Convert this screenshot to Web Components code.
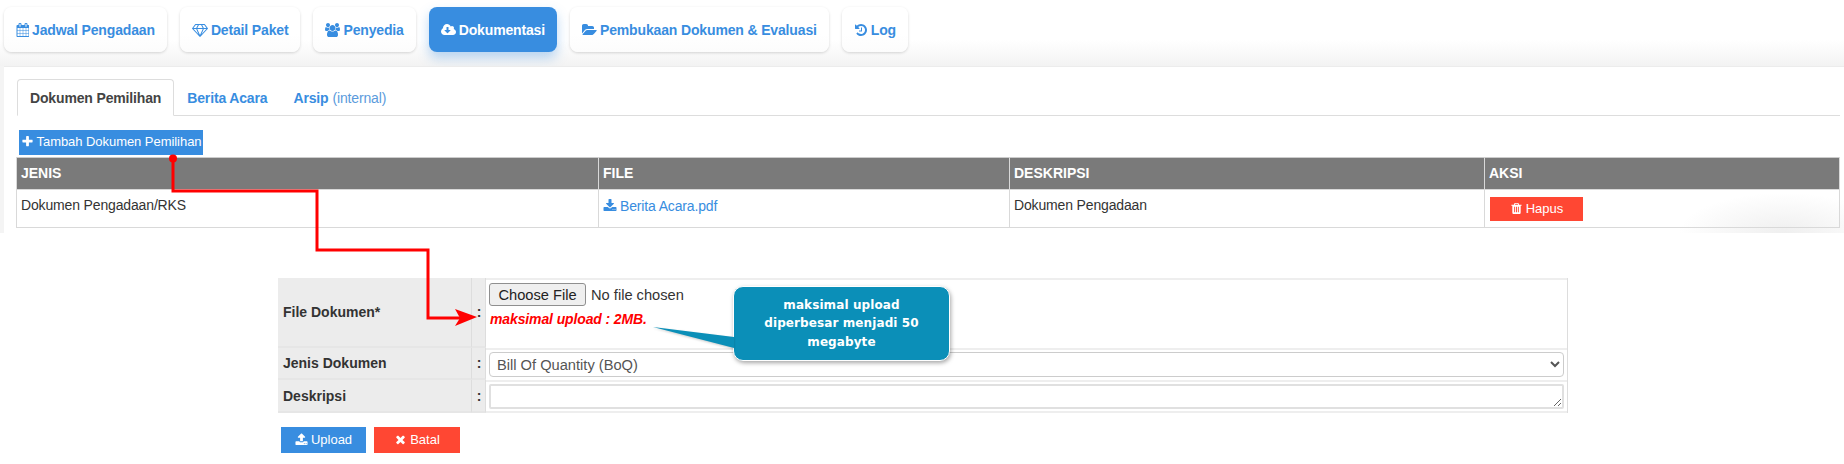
<!DOCTYPE html>
<html lang="id">
<head>
<meta charset="utf-8">
<title>Dokumentasi</title>
<style>
html,body{margin:0;padding:0;background:#fff;overflow:hidden}
body{font:14px "Liberation Sans",Arial,sans-serif;color:#333}
</style>
</head>
<body>
<doc-page>
  <top-nav>
    <nav-pill icon="calendar">Jadwal Pengadaan</nav-pill>
    <nav-pill icon="diamond">Detail Paket</nav-pill>
    <nav-pill icon="users">Penyedia</nav-pill>
    <nav-pill icon="cloud" active>Dokumentasi</nav-pill>
    <nav-pill icon="folder">Pembukaan Dokumen &amp; Evaluasi</nav-pill>
    <nav-pill icon="history">Log</nav-pill>
  </top-nav>
  <content-panel>
    <sub-tabs>
      <sub-tab active>Dokumen Pemilihan</sub-tab>
      <sub-tab>Berita Acara</sub-tab>
      <sub-tab>Arsip <small slot="note">(internal)</small></sub-tab>
    </sub-tabs>
    <action-btn icon="plus" tone="blue" style="--w:184px;--h:25px;--ml:3px;--mt:14px;--ls:-.05px">Tambah Dokumen Pemilihan</action-btn>
    <doc-table>
      <table-cell head>JENIS</table-cell>
      <table-cell head>FILE</table-cell>
      <table-cell head>DESKRIPSI</table-cell>
      <table-cell head>AKSI</table-cell>
      <table-cell>Dokumen Pengadaan/RKS</table-cell>
      <table-cell><file-link>Berita Acara.pdf</file-link></table-cell>
      <table-cell>Dokumen Pengadaan</table-cell>
      <table-cell action><action-btn icon="trash" tone="red" style="--w:93px;--h:24px">Hapus</action-btn></table-cell>
    </doc-table>
  </content-panel>
  <upload-form></upload-form>
  <red-connector></red-connector>
  <callout-note>maksimal upload diperbesar menjadi 50 megabyte</callout-note>
</doc-page>

<script>
const ICONS={
plus:['0 0 1792 1792','M1600 736v192q0 40-28 68t-68 28h-416v416q0 40-28 68t-68 28h-192q-40 0-68-28t-28-68v-416h-416q-40 0-68-28t-28-68v-192q0-40 28-68t68-28h416v-416q0-40 28-68t68-28h192q40 0 68 28t28 68v416h416q40 0 68 28t28 68z'],
times:['0 0 1792 1792','M1490 1322q0 40-28 68l-136 136q-28 28-68 28t-68-28l-294-294-294 294q-28 28-68 28t-68-28l-136-136q-28-28-28-68t28-68l294-294-294-294q-28-28-28-68t28-68l136-136q28-28 68-28t68 28l294 294 294-294q28-28 68-28t68 28l136 136q28 28 28 68t-28 68l-294 294 294 294q28 28 28 68z'],
trash:['0 0 1792 1792','M704 1376v-704q0-14-9-23t-23-9h-64q-14 0-23 9t-9 23v704q0 14 9 23t23 9h64q14 0 23-9t9-23zm256 0v-704q0-14-9-23t-23-9h-64q-14 0-23 9t-9 23v704q0 14 9 23t23 9h64q14 0 23-9t9-23zm256 0v-704q0-14-9-23t-23-9h-64q-14 0-23 9t-9 23v704q0 14 9 23t23 9h64q14 0 23-9t9-23zm-544-992h448l-48-117q-7-9-17-11h-317q-10 2-17 11zm928 32v64q0 14-9 23t-23 9h-96v948q0 83-47 143.500t-113 60.500h-832q-66 0-113-58.500t-47-141.500v-952h-96q-14 0-23-9t-9-23v-64q0-14 9-23t23-9h309l70-167q15-37 54-63t79-26h320q40 0 79 26t54 63l70 167h309q14 0 23 9t9 23z'],
download:['0 0 1792 1792','M1344 1344q0-26-19-45t-45-19-45 19-19 45 19 45 45 19 45-19 19-45zm256 0q0-26-19-45t-45-19-45 19-19 45 19 45 45 19 45-19 19-45zm128-224v320q0 40-28 68t-68 28h-1472q-40 0-68-28t-28-68v-320q0-40 28-68t68-28h465l135 136q58 56 136 56t136-56l136-136h464q40 0 68 28t28 68zm-325-569q17 41-14 70l-448 448q-18 19-45 19t-45-19l-448-448q-31-29-14-70 17-39 59-39h256v-448q0-26 19-45t45-19h256q26 0 45 19t19 45v448h256q42 0 59 39z'],
upload:['0 0 1792 1792','M1344 1472q0-26-19-45t-45-19-45 19-19 45 19 45 45 19 45-19 19-45zm256 0q0-26-19-45t-45-19-45 19-19 45 19 45 45 19 45-19 19-45zm128-224v320q0 40-28 68t-68 28h-1472q-40 0-68-28t-28-68v-320q0-40 28-68t68-28h427q21 56 70.500 92t110.500 36h256q61 0 110.500-36t70.500-92h427q40 0 68 28t28 68zm-325-648q-17 40-59 40h-256v448q0 26-19 45t-45 19h-256q-26 0-45-19t-19-45v-448h-256q-42 0-59-40-17-39 14-69l448-448q18-19 45-19t45 19l448 448q31 30 14 69z'],
cloud:['0 0 1920 1792','M1216 928q0-14-9-23t-23-9h-224v-352q0-13-9.500-22.500t-22.500-9.500h-192q-13 0-22.500 9.500t-9.500 22.500v352h-224q-14 0-23 9t-9 23q0 15 9 24l352 352q9 9 23 9t23-9l351-351q10-12 10-24zm704 224q0 159-112.500 271.500t-271.500 112.500h-1088q-185 0-316.500-131.500t-131.500-316.500q0-130 70-240t188-165q-2-30-2-43 0-212 150-362t362-150q156 0 285.500 87t188.500 231q71-62 166-62 106 0 181 75t75 181q0 76-41 138 130 31 213.500 135.500t83.500 238.500z'],
folder:['0 0 1920 1792','M1879 952q0 31-31 66l-336 396q-43 51-120.500 86.500t-143.500 35.500h-1088q-34 0-60.500-13t-26.500-43q0-31 31-66l336-396q43-51 120.500-86.500t143.500-35.500h1088q34 0 60.500 13t26.500 43zm-343-344v160h-832q-94 0-197 47.500t-164 119.500l-337 396-5 6q0-4-.5-12.500t-.500-12.500v-960q0-92 66-158t158-66h320q92 0 158 66t66 158v32h544q92 0 158 66t66 158z'],
users:['0 0 1920 1792','M593 896q-162 5-265 128h-134q-82 0-138-40.500t-56-118.500q0-353 124-353 6 0 43.500 21t97.500 42.500 119 21.500q67 0 133-23-5 37-5 66 0 139 81 256zm1071 637q0 120-73 189.500t-194 69.500h-874q-121 0-194-69.500t-73-189.500q0-53 3.500-103.500t14-109 26.500-108.500 43-97.500 62-81 85.500-53.500 111.500-20q10 0 43 21.500t73 48 107 48 135 21.500 135-21.500 107-48 73-48 43-21.500q61 0 111.500 20t85.500 53.500 62 81 43 97.500 26.500 108.500 14 109 3.500 103.500zm-1024-1277q0 106-75 181t-181 75-181-75-75-181 75-181 181-75 181 75 75 181zm704 384q0 159-112.500 271.500t-271.500 112.500-271.500-112.500-112.500-271.500 112.500-271.500 271.500-112.500 271.500 112.500 112.500 271.500zm576 225q0 78-56 118.500t-138 40.500h-134q-103-123-265-128 81-117 81-256 0-29-5-66 66 23 133 23 59 0 119-21.500t97.500-42.500 43.500-21q124 0 124 353zm-128-609q0 106-75 181t-181 75-181-75-75-181 75-181 181-75 181 75 75 181z'],
history:['0 0 1792 1792','M1664 896q0 156-61 298t-164 245-245 164-298 61q-172 0-327-72.500t-264-204.500q-7-10-6.500-22.500t8.500-20.500l137-138q10-9 25-9 16 2 23 12 73 95 179 147t225 52q104 0 198.500-40.500t163.500-109.500 109.500-163.500 40.500-198.500-40.500-198.500-109.500-163.500-163.500-109.500-198.500-40.500q-98 0-188 35.500t-160 101.500l137 138q31 30 14 69-17 40-59 40h-448q-26 0-45-19t-19-45v-448q0-42 40-59 39-17 69 14l130 129q107-101 244.500-156.500t284.500-55.500q156 0 298 61t245 164 164 245 61 298zm-640-288v448q0 14-9 23t-23 9h-320q-14 0-23-9t-9-23v-64q0-14 9-23t23-9h224v-352q0-14 9-23t23-9h64q14 0 23 9t9 23z'],
calendar:['0 0 1664 1792','M192 1664h288v-288h-288v288zm352 0h320v-288h-320v288zm-352-352h288v-320h-288v320zm352 0h320v-320h-320v320zm-352-384h288v-288h-288v288zm736 736h320v-288h-320v288zm-384-736h320v-288h-320v288zm768 736h288v-288h-288v288zm-384-352h320v-320h-320v320zm-352-864v-288q0-13-9.500-22.500t-22.500-9.500h-64q-13 0-22.500 9.500t-9.500 22.500v288q0 13 9.500 22.500t22.500 9.500h64q13 0 22.500-9.500t9.500-22.500zm736 864h288v-320h-288v320zm-384-384h320v-288h-320v288zm384 0h288v-288h-288v288zm32-480v-288q0-13-9.500-22.500t-22.500-9.500h-64q-13 0-22.500 9.500t-9.500 22.500v288q0 13 9.500 22.500t22.500 9.500h64q13 0 22.500-9.500t9.500-22.500zm384-64v1280q0 52-38 90t-90 38h-1408q-52 0-90-38t-38-90v-1280q0-52 38-90t90-38h128v-96q0-66 47-113t113-47h64q66 0 113 47t47 113v96h384v-96q0-66 47-113t113-47h64q66 0 113 47t47 113v96h128q52 0 90 38t38 90z'],
diamond:['0 0 2048 1792','M212 768l623 665-300-665h-323zm812 772l349-772h-698zm-486-900l204-384h-262l-288 384h346zm675 793l623-665h-323zm-530-793h682l-204-384h-274zm827 0h346l-288-384h-262zm141-486l384 512q14 18 13 41.500t-17 40.500l-960 1024q-18 20-47 20t-47-20l-960-1024q-16-17-17-40.500t13-41.500l384-512q18-26 51-26h1152q33 0 51 26z']
};
function def(name,css,html){
  customElements.define(name,class extends HTMLElement{
    constructor(){super();const r=this.attachShadow({mode:'open'});r.innerHTML='<style>'+css+'</style>'+html(this);}
  });
}
customElements.define('fa-icon',class extends HTMLElement{
  connectedCallback(){
    if(this.shadowRoot)return;
    const r=this.attachShadow({mode:'open'});
    const ic=ICONS[this.getAttribute('name')];
    const p=ic[0].split(' ');const s=parseFloat(this.getAttribute('size')||14);
    r.innerHTML='<style>:host{display:inline-flex;flex:none}svg{display:block;fill:currentColor}</style><svg width="'+(s*p[2]/1792)+'" height="'+s+'" viewBox="'+ic[0]+'"><path d="'+ic[1]+'"/></svg>';
  }
});
def('doc-page',':host{display:block;position:relative;width:1844px;height:464px;overflow:hidden;background:#fff}',()=>'<slot></slot>');
def('top-nav',':host{display:flex;gap:13px;height:59px;padding:7px 0 0 4px;background:linear-gradient(#fff 0,#fff 40px,#f3f3f3 66px)}',()=>'<slot></slot>');
customElements.define('nav-pill',class extends HTMLElement{
  constructor(){super();const a=this.hasAttribute('active');const r=this.attachShadow({mode:'open'});
    r.innerHTML=`<style>:host{display:flex;align-items:center;gap:3px;height:45px;box-sizing:border-box;padding:0 12px;border-radius:8px;font:bold 14px "Liberation Sans",Arial,sans-serif;letter-spacing:-.15px;
    color:${a?'#fff':'#388de0'};background:${a?'#388de0':'linear-gradient(#fff 60%,#fcfcfc)'};box-shadow:${a?'0 6px 12px rgba(56,141,224,.35)':'0 1px 3px rgba(0,0,0,.16)'}}</style><fa-icon name="${this.getAttribute('icon')}" size="14"></fa-icon><span><slot></slot></span>`;}
});
def('content-panel',`:host{display:block;position:relative;height:167px;box-sizing:border-box;margin-left:4px;padding:12px 4px 0 12px;border-top:1px solid #ececec;
 background:radial-gradient(ellipse 105px 40px at calc(100% - 60px) 100%,#efefef,rgba(255,255,255,0) 100%),#fff}
 :host::before{content:"";position:absolute;left:-4px;top:-1px;width:4px;height:167px;background:#f4f4f4}`,()=>'<slot></slot>');
def('sub-tabs',':host{display:flex;height:37px;box-sizing:border-box;margin-left:1px;border-bottom:1px solid #ddd}',()=>'<slot></slot>');
customElements.define('sub-tab',class extends HTMLElement{
  constructor(){super();const a=this.hasAttribute('active');const r=this.attachShadow({mode:'open'});
  r.innerHTML=`<style>:host{display:flex;align-items:center;gap:4px;height:37px;box-sizing:border-box;padding:0 13px;font:bold 14px "Liberation Sans",Arial,sans-serif;letter-spacing:-.15px;white-space:nowrap;
  color:${a?'#444':'#388de0'};${a?'background:#fff;border:1px solid #ddd;border-bottom-color:#fff;border-radius:4px 4px 0 0;padding:0 12px;':''}}
  ::slotted(small){font-weight:normal;font-size:14px;color:#5b9bdc}</style><slot></slot><slot name="note"></slot>`;}
});
customElements.define('action-btn',class extends HTMLElement{
  constructor(){super();const red=this.getAttribute('tone')==='red';const r=this.attachShadow({mode:'open'});
  r.innerHTML=`<style>:host{display:flex;align-items:center;justify-content:center;gap:3px;width:var(--w);height:var(--h);margin:var(--mt,0) 0 0 var(--ml,0);padding-bottom:2px;box-sizing:border-box;letter-spacing:var(--ls,0);
  font:13px "Liberation Sans",Arial,sans-serif;color:#fff;background:${red?'#ff4733':'#388de0'};white-space:nowrap}</style><fa-icon name="${this.getAttribute('icon')}" size="13"></fa-icon><span><slot></slot></span>`;}
});
def('doc-table',':host{display:grid;grid-template-columns:581px 411px 475px 355px;grid-template-rows:33px 37px;margin:2px 0 0 0;width:1824px;box-sizing:border-box;border:1px solid #d9d9d9;border-width:0 1px 1px 1px}',()=>'<slot></slot>');
customElements.define('table-cell',class extends HTMLElement{
  constructor(){super();const h=this.hasAttribute('head');const ac=this.hasAttribute('action');const r=this.attachShadow({mode:'open'});
  r.innerHTML=`<style>:host{display:block;box-sizing:border-box;border-left:1px solid #d9d9d9;padding:${ac?'7px 0 0 5px':'7px 0 0 4px'};
  font:${h?'bold ':''}14px "Liberation Sans",Arial,sans-serif;${h?'':'letter-spacing:-.15px;'}color:${h?'#fff':'#333'};${h?'background:#7a7a7a;border-top:1px solid #ccc;border-bottom:1px solid #d9d9d9;':''}}
  :host(:nth-child(4n+1)){border-left:0}</style><slot></slot>`;}
});
def('file-link',':host{display:inline-flex;align-items:center;gap:3px;color:#388de0;padding-top:1px}',()=>'<fa-icon name="download" size="14"></fa-icon><span><slot></slot></span>');
customElements.define('upload-form',class extends HTMLElement{
  constructor(){super();const r=this.attachShadow({mode:'open'});
  r.innerHTML=`<style>
  :host{display:block;width:1290px;margin:45px 0 0 278px;font:14px "Liberation Sans",Arial,sans-serif;color:#333}
  .grid{display:grid;grid-template-columns:194px 14px 1fr;grid-template-rows:70px 32px 33px;box-sizing:border-box;border-right:1px solid #ddd;background:#ececec}
  .l,.c{display:flex;align-items:center;font-weight:bold;box-sizing:border-box;border-bottom:2px solid #e6e6e6}
  .l{padding-left:5px;border-right:1px solid #ddd}
  .c{justify-content:center;border-right:1px solid #ddd;padding-left:1px}
  .v{background:#fff;box-sizing:border-box;border-top:2px solid #eee;padding:3px 3px 0 3px}
  .v.s{padding-top:2px}
  .v.b{border-bottom:2px solid #eee}
  input[type=file]{display:block;font:14.67px "Liberation Sans",Arial,sans-serif;color:#333;margin:0;height:23px}
  input[type=file]::file-selector-button{font:14.67px "Liberation Sans",Arial,sans-serif;height:23px;width:97px;padding:0;border:1px solid #8f8f8f;border-radius:3px;background:#efefef;color:#222;margin-right:5px}
  .w{display:block;margin:5px 0 0 1px;color:#f00;font:italic bold 14px "Liberation Sans",Arial,sans-serif;letter-spacing:-.12px}
  select,textarea{display:block;width:100%;box-sizing:border-box;font:14.67px "Liberation Sans",Arial,sans-serif;color:#555;background:#fff;border:1px solid #ccc;border-radius:4px;margin:0}
  select{height:25px;padding:0 3px}
  textarea{height:25px;border-radius:2px;border:2px solid #e0e0e0;padding:0;resize:both}
  .btns{display:flex;gap:8px;margin:14px 0 0 3px}
  </style>
  <div class="grid">
    <div class="l">File Dokumen*</div><div class="c">:</div>
    <div class="v"><input type="file"><span class="w">maksimal upload : 2MB.</span></div>
    <div class="l">Jenis Dokumen</div><div class="c">:</div>
    <div class="v s"><select><option>Bill Of Quantity (BoQ)</option></select></div>
    <div class="l">Deskripsi</div><div class="c">:</div>
    <div class="v s b"><textarea></textarea></div>
  </div>
  <div class="btns">
    <action-btn icon="upload" tone="blue" style="--w:85px;--h:26px">Upload</action-btn>
    <action-btn icon="times" tone="red" style="--w:86px;--h:26px">Batal</action-btn>
  </div>`;}
});
def('red-connector',':host{position:absolute;left:0;top:0;width:1844px;height:464px;pointer-events:none}svg{display:block}',()=>`<svg width="1844" height="464" viewBox="0 0 1844 464"><circle cx="173" cy="158.500" r="4" fill="#f00"/><path d="M173 158V191H317V250H428V318H460" fill="none" stroke="#f00" stroke-width="3"/><path d="M477 317 455 309 460 318 455 326z" fill="#f00"/></svg>`);
def('callout-note',`:host{position:absolute;left:733px;top:286px;width:217px;height:75px;box-sizing:border-box;padding:9px 20px 0;border-radius:10px;background:#0b8fb8;border:1px solid #fff;
 box-shadow:1px 2px 4px rgba(0,0,0,.35);color:#fff;font:bold 12px "DejaVu Sans",sans-serif;letter-spacing:.1px;line-height:18.300px;text-align:center}
 svg{position:absolute;left:-81px;top:40px;overflow:visible;filter:drop-shadow(0 1px 1px rgba(0,0,0,.2))}`,()=>`<svg width="82" height="24" viewBox="0 0 82 24"><path d="M0 0 81 10V21z" fill="#0b8fb8"/></svg><slot></slot>`);
</script>
</body>
</html>
